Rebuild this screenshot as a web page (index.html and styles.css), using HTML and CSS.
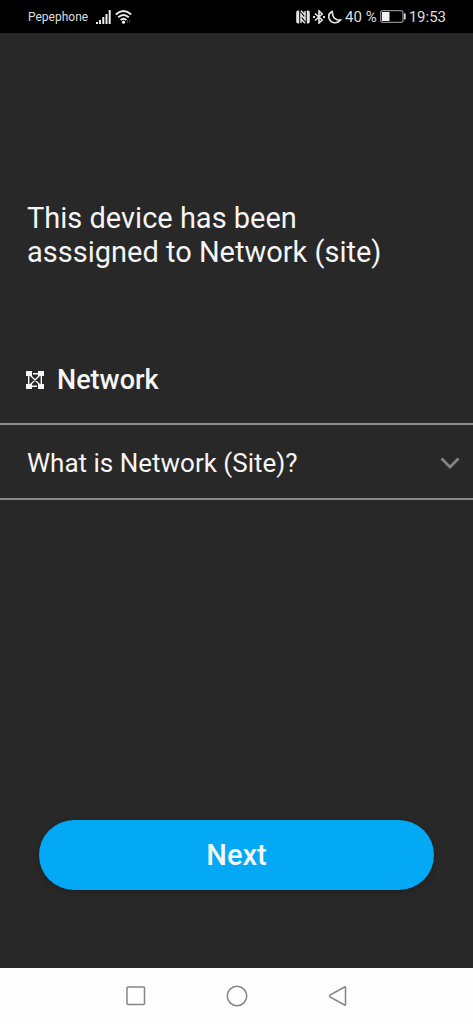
FILE: index.html
```html
<!DOCTYPE html>
<html lang="en">
<head>
<meta charset="utf-8">
<meta name="viewport" content="width=device-width, initial-scale=1">
<title>Network</title>
<link rel="stylesheet" href="styles.css">
</head>
<body>
<div class="screen">
  <header class="status">
    <div class="status-left">
      <span class="carrier">Pepephone</span>
      <svg width="15" height="14" viewBox="0 0 15 14" aria-hidden="true"><path d="M1 12v2M4 10v4M7.300 7v7M10.500 4v10M13.700 0v14" stroke="#ececec" stroke-width="2" fill="none"/></svg>
      <svg width="17" height="14" viewBox="0 0 17 14" fill="none" stroke="#ececec" stroke-width="1.900" aria-hidden="true"><path d="M.8 4.500Q8.500-2.300 16.200 4.500M3.200 7.300Q8.500 2.700 13.800 7.300M5.600 10Q8.500 7.500 11.400 10"/><circle cx="8.500" cy="12.200" r="1.600" fill="#ececec" stroke="none"/><path d="M12.500 10v3M14.800 10v3" stroke="#444" stroke-width="1"/></svg>
    </div>
    <div class="status-right">
      <svg width="14" height="14" viewBox="0 0 14 14" aria-hidden="true"><path d="M3.200 .5V13.500H2Q.2 13.500 .2 11.500V2.500Q.2 .5 2 .5ZM10.800 13.500V.5H12Q13.800 .5 13.800 2.500V11.500Q13.800 13.500 12 13.500Z" fill="#e4e4e4"/><path d="M5 13V4.500L9 9.500V1M5 .8 9 5M5 9 9 13.200" fill="none" stroke="#e4e4e4" stroke-width="1.500"/></svg>
      <svg width="12" height="14" viewBox="0 0 12 14" fill="none" stroke="#e4e4e4" stroke-width="1.600" aria-hidden="true"><path d="M2 3.500 9.200 10 6 13V1L9.200 4 2 10.500"/><path d="M0 7H2M10 7h2" stroke-width="1.800"/></svg>
      <svg width="14" height="14" viewBox="0 0 14 14" aria-hidden="true"><path d="M4.300 1.200C1 3 .2 6 1.200 8.800C2.700 13 8.800 14.700 13 9.800C9 10.700 4.100 8.700 4.300 1.200Z" fill="none" stroke="#e4e4e4" stroke-width="1.600" stroke-linejoin="round"/></svg>
      <span>40 %</span>
      <svg width="26" height="13" viewBox="0 0 26 13" aria-hidden="true"><rect x=".7" y=".7" width="22.300" height="11.600" rx="2" fill="none" stroke="#8c8c8c" stroke-width="1.300"/><path d="M2 2h7.500v9H2z" fill="#f2f2f2"/><path d="M24.800 3.500v6" stroke="#ddd" stroke-width="1.700"/></svg>
      <time>19:53</time>
    </div>
  </header>
  <main class="content">
    <h1 class="title">This device has been asssigned to Network (site)</h1>
    <h2 class="network">
      <svg width="18" height="18" viewBox="0 0 18 18" aria-hidden="true"><path d="M4 4 14 14M14 4 4 14M7 2.700H14M4 15.300H11M2.700 4V14M15.300 4V14" stroke="#f5f5f5" stroke-width="1.400" fill="none"/><path d="M0 0h6v5H0zM12 0h6v5h-6zM0 13h6v5H0zM12 13h6v5h-6z" fill="#f5f5f5"/></svg>
      <span>Network</span>
    </h2>
    <button class="question" type="button" aria-expanded="false">
      <span>What is Network (Site)?</span>
      <svg width="20" height="12" viewBox="0 0 20 12" aria-hidden="true"><path d="M1.500 1.500 10 10 18.500 1.500" fill="none" stroke="#858585" stroke-width="2.800"/></svg>
    </button>
    <button class="next" type="button">Next</button>
  </main>
  <nav class="navbar" aria-label="System">
    <button class="key" type="button" aria-label="Recent apps"><svg width="22" height="22" viewBox="0 0 22 22"><rect x="2" y="2" width="17.500" height="17.500" rx="1"/></svg></button>
    <button class="key" type="button" aria-label="Home"><svg width="22" height="22" viewBox="0 0 22 22"><circle cx="11" cy="11" r="9.700"/></svg></button>
    <button class="key" type="button" aria-label="Back"><svg width="22" height="22" viewBox="0 0 22 22"><path d="M18.500 2.500V19.500Q18.500 20.500 17.500 20L3 12Q2 11 3 10L17.500 2Q18.500 1.500 18.500 2.500Z"/></svg></button>
  </nav>
</div>
</body>
</html>
```
FILE: styles.css
```css
* {
  box-sizing: border-box;
}

body {
  margin: 0;
  font-family: Roboto, "Liberation Sans", sans-serif;
  background: #282828;
  color: #f5f5f5;
}

button {
  border: 0;
  padding: 0;
  background: none;
  color: inherit;
  font-family: inherit;
  cursor: pointer;
}

svg {
  display: block;
  flex: none;
}

.screen {
  display: flex;
  flex-direction: column;
  min-height: 100vh;
}

.status {
  display: flex;
  justify-content: space-between;
  align-items: center;
  height: 33px;
  padding: 0 27px 0 28px;
  background: #000;
  color: #dedede;
}

.status-left,
.status-right {
  display: flex;
  align-items: center;
}

.status-left {
  gap: 4px;
}

.status-right {
  gap: 3px;
  font-size: 15px;
}

.carrier {
  margin-right: 4px;
  font-size: 12px;
}

.content {
  flex: 1;
  display: flex;
  flex-direction: column;
}

.title {
  max-width: 440px;
  margin: 168px 0 0;
  padding: 0 27px;
  font-size: 29px;
  font-weight: 400;
  line-height: 34px;
}

.network {
  display: flex;
  align-items: center;
  gap: 13px;
  margin: 94px 0 26px;
  padding: 0 26px;
  font-size: 27px;
  font-weight: 500;
  line-height: 34px;
}

.question {
  display: flex;
  justify-content: space-between;
  align-items: center;
  height: 77px;
  padding: 3px 13px 0 27px;
  border-top: 2px solid #8c8c8c;
  border-bottom: 2px solid #8c8c8c;
  font-size: 26px;
  text-align: left;
}

.next {
  height: 70px;
  margin: auto 39px 78px;
  border-radius: 35px;
  background: #03a9f4;
  box-shadow: 0 2px 5px #1f1f1f;
  font-size: 29px;
  font-weight: 500;
}

.navbar {
  display: flex;
  justify-content: center;
  align-items: center;
  gap: 79px;
  height: 56px;
  background: #fdfdfd;
}

.key svg {
  fill: none;
  stroke: #858585;
  stroke-width: 1.5px;
}
```
